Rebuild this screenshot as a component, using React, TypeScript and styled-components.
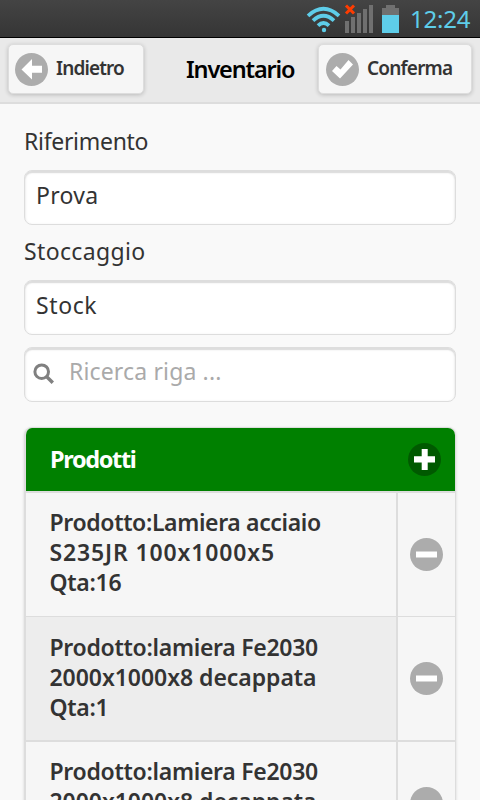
import React from "react";
import styled, { createGlobalStyle } from "styled-components";

const GlobalStyle = createGlobalStyle`
  * { box-sizing: border-box; }
  html, body { margin: 0; padding: 0; background: #f9f9f9; overflow: hidden; }
  body { font-family: "Noto Sans", "Open Sans", sans-serif; color: #333; }
`;

const Screen = styled.div`
  width: 480px;
  height: 800px;
  overflow: hidden;
  background: #f9f9f9;
`;

const StatusBar = styled.div`
  height: 38px;
  display: flex;
  justify-content: flex-end;
  background: linear-gradient(#444, #353535);
  border-bottom: 1px solid #000;
`;

const StatusIcons = styled.svg`
  display: block;
  flex: none;
`;

const Clock = styled.div`
  width: 72px;
  padding-left: 2px;
  font-size: 24px;
  line-height: 38px;
  letter-spacing: -0.2px;
  color: #5ecde9;
  white-space: nowrap;
`;

const Header = styled.header`
  height: 66px;
  padding: 6px 8px 0;
  display: grid;
  grid-template-columns: 136px 1fr 154px;
  align-items: start;
  background: #e9e9e9;
  border-bottom: 2px solid #ddd;
`;

const HeaderButton = styled.button<{ $spacing: number; $inset: number }>`
  height: 50px;
  display: flex;
  align-items: center;
  gap: 8px;
  padding: 0 0 0 ${(p) => p.$inset}px;
  border: 1px solid #ddd;
  border-radius: 5px;
  background: #f6f6f6;
  box-shadow: 0 1px 4px rgba(0, 0, 0, 0.2);
  color: #333;
  font: 600 19px/46px "Noto Sans", sans-serif;
  letter-spacing: ${(p) => p.$spacing}px;
  text-shadow: 0 1px 0 #f3f3f3;
`;

const ButtonText = styled.span`
  height: 48px;
`;

const Title = styled.h1`
  margin: 0;
  padding: 2px 0 0 42px;
  font-size: 23.5px;
  line-height: 46px;
  font-weight: 600;
  letter-spacing: -1.15px;
  color: #000;
  text-shadow: 0 1px 0 #eee;
  white-space: nowrap;
`;

const Disc = styled.svg`
  display: block;
  flex: none;
`;

const Content = styled.main`
  padding: 20px 24px 0;
`;

const Label = styled.label<{ $spacing: number }>`
  display: block;
  height: 36px;
  margin: 9px 0 10px;
  font-size: 23px;
  line-height: 34px;
  letter-spacing: ${(p) => p.$spacing}px;
  &:first-child { margin-top: 0; }
`;

const Field = styled.div<{ $spacing: number; $muted?: boolean }>`
  height: 55px;
  display: flex;
  align-items: center;
  padding: 0 11px 6px;
  border: 1px solid #ddd;
  border-radius: 8px;
  background: #fff;
  box-shadow: inset 0 2px 1px #ddd, inset 0 1px 3px rgba(0, 0, 0, 0.12);
  font-size: 23px;
  letter-spacing: ${(p) => p.$spacing}px;
  color: ${(p) => (p.$muted ? "#aaa" : "#333")};
`;

const SearchField = styled(Field)`
  margin-top: 12px;
  padding: 0 8px 7px;
  gap: 14px;
`;

const SearchIcon = styled.svg`
  flex: none;
  margin-top: 5px;
`;

const List = styled.section`
  margin-top: 25px;
  border: solid #ddd;
  border-width: 1px 1px 0 2px;
  border-radius: 8px 8px 0 0;
  box-shadow: 0 1px 3px rgba(0, 0, 0, 0.15);
  overflow: hidden;
`;

const ListHeader = styled.div`
  height: 63px;
  padding: 0 14px 0 24px;
  display: flex;
  align-items: center;
  justify-content: space-between;
  background: #008000;
  color: #fff;
  font-size: 23.5px;
  font-weight: 700;
  letter-spacing: -1.35px;
`;

const ListTitle = styled.span`
  padding-bottom: 2px;
`;

const Row = styled.div<{ $rule: number }>`
  display: grid;
  grid-template-columns: 370px 1fr;
  border-top: ${(p) => p.$rule}px solid #ddd;
`;

const RowText = styled.div<{ $shaded?: boolean }>`
  height: 123px;
  padding: ${(p) => (p.$shaded ? 14.5 : 13.5)}px 0 0 23.5px;
  background: ${(p) => (p.$shaded ? "#ededed" : "#f6f6f6")};
  font-size: 23px;
  font-weight: 600;
  line-height: 30px;
  white-space: nowrap;
`;

const Line = styled.div<{ $spacing: number }>`
  letter-spacing: ${(p) => p.$spacing}px;
`;

const RemoveCell = styled.div`
  display: flex;
  align-items: center;
  padding-left: 12px;
  border-left: 2px solid #ddd;
  background: #f6f6f6;
`;

const shapes = {
  back: "M6.5 16.5L17 6v6.700h10v7H17v6.800z",
  check: "M6 18l4.500-5 4 3.500L22.500 7l4.500 4.500-13 14z",
  plus: "M13.700 6h6v7.200H27v6.400h-7.300V27h-6v-7.400H6v-6.400h7.700z",
  minus: "M6 13.500h21v6H6z",
};

function DiscIcon({ kind, fill = "#acacac" }: { kind: keyof typeof shapes; fill?: string }) {
  return (
    <Disc width="33" height="33" viewBox="0 0 33 33">
      <circle cx="16.5" cy="16.5" r="16.5" fill={fill} />
      <path d={shapes[kind]} fill="#fff" />
    </Disc>
  );
}

const rows = [
  { rule: 2, shaded: false, lines: [["Prodotto:Lamiera acciaio", -0.36], ["S235JR 100x1000x5", 0.85], ["Qta:16", -0.3]] },
  { rule: 1, shaded: true, lines: [["Prodotto:lamiera Fe2030", -0.29], ["2000x1000x8 decappata", -0.05], ["Qta:1", -0.3]] },
  { rule: 2, shaded: false, lines: [["Prodotto:lamiera Fe2030", -0.29], ["2000x1000x8 decappata", -0.05], ["Qta:1", -0.3]] },
] as { rule: number; shaded: boolean; lines: [string, number][] }[];

export default function App() {
  return (
    <Screen>
      <GlobalStyle />
      <StatusBar>
        <StatusIcons width="102" height="37" viewBox="306 0 102 37">
          <g fill="none" stroke="#5ecde9" strokeWidth="3.8">
            <path d="M308 15.800Q323.500 1.800 339 15.800" />
            <path d="M313 20.700Q323.500 11 334 20.700" />
            <path d="M318 25.700Q323.500 20.500 329 25.700" />
          </g>
          <circle cx="324" cy="30" r="2.200" fill="#5ecde9" />
          <g fill="#707070">
            <path d="M345 21h4v12h-4zM351 17h4v16h-4zM357 13h4v20h-4zM363 9h4v24h-4zM369 5h4v28h-4z" />
            <path d="M386 5h9v3h4v7h-17V8h4z" />
          </g>
          <path d="M346 5.500l8 8m0-8l-8 8" stroke="#ff3c00" strokeWidth="3" />
          <path d="M382 15h17v18h-17z" fill="#5ecde9" />
        </StatusIcons>
        <Clock>12:24</Clock>
      </StatusBar>
      <Header>
        <HeaderButton $spacing={-0.88} $inset={6}><DiscIcon kind="back" /><ButtonText>Indietro</ButtonText></HeaderButton>
        <Title>Inventario</Title>
        <HeaderButton $spacing={-0.8} $inset={7}><DiscIcon kind="check" /><ButtonText>Conferma</ButtonText></HeaderButton>
      </Header>
      <Content>
        <Label $spacing={-0.3}>Riferimento</Label>
        <Field $spacing={0.3}>Prova</Field>
        <Label $spacing={0.35}>Stoccaggio</Label>
        <Field $spacing={0.6}>Stock</Field>
        <SearchField $spacing={0.15} $muted>
          <SearchIcon width="22" height="22" viewBox="0 0 22 22" fill="none" stroke="#808080">
            <circle cx="8.700" cy="8.700" r="6.800" strokeWidth="3" />
            <path d="M13.500 13.500l6.300 6.300" strokeWidth="3.400" />
          </SearchIcon>
          Ricerca riga ...
        </SearchField>
        <List>
          <ListHeader><ListTitle>Prodotti</ListTitle><DiscIcon kind="plus" fill="#005900" /></ListHeader>
          {rows.map((row, i) => (
            <Row key={i} $rule={row.rule}>
              <RowText $shaded={row.shaded}>
                {row.lines.map(([text, spacing]) => <Line key={text} $spacing={spacing}>{text}</Line>)}
              </RowText>
              <RemoveCell><DiscIcon kind="minus" /></RemoveCell>
            </Row>
          ))}
        </List>
      </Content>
    </Screen>
  );
}
